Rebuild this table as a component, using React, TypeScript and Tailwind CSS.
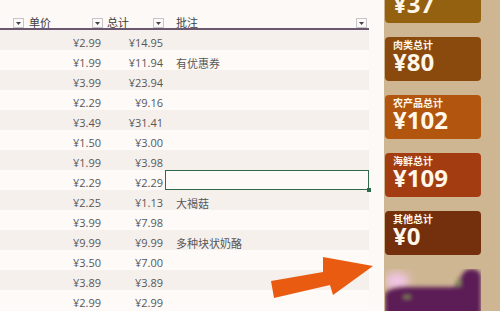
import React from "react";

const rows: [string, string, string][] = [
  ["¥2.99", "¥14.95", ""],
  ["¥1.99", "¥11.94", "有优惠券"],
  ["¥3.99", "¥23.94", ""],
  ["¥2.29", "¥9.16", ""],
  ["¥3.49", "¥31.41", ""],
  ["¥1.50", "¥3.00", ""],
  ["¥1.99", "¥3.98", ""],
  ["¥2.29", "¥2.29", ""],
  ["¥2.25", "¥1.13", "大褐菇"],
  ["¥3.99", "¥7.98", ""],
  ["¥9.99", "¥9.99", "多种块状奶酪"],
  ["¥3.50", "¥7.00", ""],
  ["¥3.89", "¥3.89", ""],
  ["¥2.99", "¥2.99", ""],
];

const cards = [
  { label: "", value: "¥37", bg: "bg-[#93610f]" },
  { label: "肉类总计", value: "¥80", bg: "bg-[#8a4a0d]" },
  { label: "农产品总计", value: "¥102", bg: "bg-[#b2550f]" },
  { label: "海鲜总计", value: "¥109", bg: "bg-[#a43c11]" },
  { label: "其他总计", value: "¥0", bg: "bg-[#74300d]" },
];

function FilterBtn() {
  return (
    <div className="w-[11px] h-[10px] border border-[#c9c4c6] bg-[#fbf9f9] flex items-center justify-center">
      <svg width="5" height="3" viewBox="0 0 5 3">
        <polygon points="0,0 5,0 2.5,3" fill="#444" />
      </svg>
    </div>
  );
}

export default function App() {
  const num = "font-['Open_Sans','Noto_Sans',sans-serif]";
  const cjk = "font-['Noto_Sans_CJK_SC','Noto_Sans',sans-serif]";
  return (
    <div className="relative w-[500px] h-[311px] overflow-hidden bg-[#fdf9f7] flex">
      {/* Sheet */}
      <div className="w-[384px] shrink-0 flex flex-col">
        <div className="h-[30px] w-[369px] border-b-2 border-[#6a5870] flex items-end text-[11px] text-[#3c3c3c]">
          <div className="w-[26px] flex justify-end pr-[2px]">
            <FilterBtn />
          </div>
          <div className="w-[78px] flex items-end justify-between pl-[3px] pr-[1px]">
            <span className={`${cjk} leading-[12px]`}>单价</span>
            <FilterBtn />
          </div>
          <div className="w-[62px] flex items-end justify-between pl-[3px] pr-[2px]">
            <span className={`${cjk} leading-[12px]`}>总计</span>
            <FilterBtn />
          </div>
          <div className="flex-1 flex items-end justify-between pl-[10px] pr-[2px]">
            <span className={`${cjk} leading-[12px]`}>批注</span>
            <FilterBtn />
          </div>
        </div>
        {rows.map((r, i) => (
          <div
            key={i}
            className={`h-[20px] w-[369px] shrink-0 flex items-end text-[11px] text-[#575757] ${
              i % 2 === 0 ? "bg-[#f6f0ed]" : "bg-[#fdfaf8]"
            }`}
          >
            <div className={`w-[104px] text-right pr-[3px] leading-[14px] ${num}`}>{r[0]}</div>
            <div className={`w-[62px] text-right pr-[3px] leading-[14px] ${num}`}>{r[1]}</div>
            {i === 7 ? (
              <div className="relative flex-1 self-stretch -ml-[1px] border-[1.5px] border-[#2f6b4a]">
                <div className="absolute -right-[3px] -bottom-[3px] w-[4px] h-[4px] bg-[#2f6b4a]" />
              </div>
            ) : (
              <div className={`flex-1 pl-[10px] leading-[14px] ${cjk}`}>{r[2]}</div>
            )}
          </div>
        ))}
      </div>

      {/* Right panel */}
      <div className="flex-1 bg-[#cfb693] pl-[1px] overflow-hidden">
        <div className="flex flex-col gap-[14px] -mt-[21px]">
          {cards.map((c, i) => (
            <div
              key={i}
              className={`w-[96px] h-[44px] shrink-0 rounded-[4px] ${c.bg} px-[8px] pt-[2px] text-[#fff7ea]`}
            >
              <div className={`text-[10px] leading-[12px] h-[12px] font-bold ${cjk}`}>{c.label}</div>
              <div className={`text-[24px] leading-[22px] font-bold ${num}`}>{c.value}</div>
            </div>
          ))}
          <div className="relative w-[96px] h-[60px] shrink-0">
            <svg width="96" height="60" viewBox="0 0 96 60" className="absolute inset-0">
              <defs>
                <filter id="b1" x="-50%" y="-50%" width="200%" height="200%">
                  <feGaussianBlur stdDeviation="4" />
                </filter>
                <filter id="b2" x="-50%" y="-50%" width="200%" height="200%">
                  <feGaussianBlur stdDeviation="2" />
                </filter>
              </defs>
              <ellipse cx="12" cy="12" rx="12" ry="9" fill="#f0c6e6" filter="url(#b1)" />
              <path
                d="M0 60 L0 24 Q6 18 22 18 L70 18 L77 6 Q80 -1 88 0 Q96 1 96 8 L96 60 Z"
                fill="#5c1c57"
                filter="url(#b2)"
              />
              <ellipse cx="22" cy="28" rx="5" ry="3" fill="#7fa04c" opacity="0.7" filter="url(#b2)" />
              <ellipse cx="74" cy="14" rx="3" ry="5" fill="#8bb05a" opacity="0.7" filter="url(#b2)" />
            </svg>
          </div>
        </div>
      </div>

      {/* Arrow */}
      <svg className="absolute left-0 top-0 pointer-events-none" width="500" height="311" viewBox="0 0 500 311">
        <polygon
          points="274,298 271,281 323,272 323,257 373,266 333,295 330,285"
          fill="#e95b10"
        />
      </svg>
    </div>
  );
}
